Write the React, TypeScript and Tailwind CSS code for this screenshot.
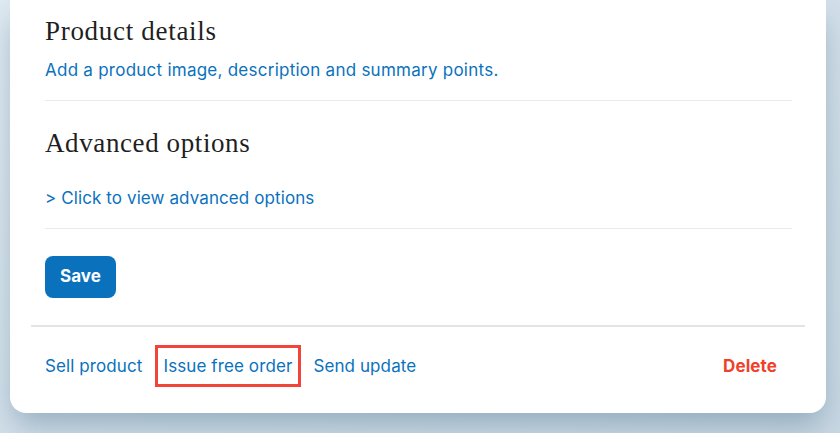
const sans = "font-['Inter','Liberation_Sans',sans-serif] tracking-[0.1px]";
const serif = "font-['Liberation_Serif','DejaVu_Serif',serif]";

export default function App() {
  return (
    <div className="h-[433px] w-[840px] overflow-hidden bg-gradient-to-br from-[#dfeaf2] via-[#d3e0ea] to-[#c9d8e3]">
      <div className="ml-[10px] w-[816px] rounded-b-2xl bg-white shadow-[0_16px_30px_-4px_rgba(90,125,150,0.5)]">
        <div className="px-[35px] pr-[34px]">
          <section className="border-b border-[#e3eaf0] pt-[14px] pb-[18px]">
            <h2 className={`${serif} text-[27px] leading-[34px] tracking-[0.7px] text-[#1f1f1f]`}>Product details</h2>
            <a className={`${sans} mt-[10px] block text-[17px] leading-[24px] tracking-[0.25px] text-[#0a72bd]`}>
              Add a product image, description and summary points.
            </a>
          </section>
          <section className="border-b border-[#e3eaf0] pt-[25px] pb-[18px]">
            <h2 className={`${serif} text-[27px] leading-[34px] tracking-[0.6px] text-[#1f1f1f]`}>Advanced options</h2>
            <a className={`${sans} mt-[26px] block text-[17px] leading-[24px] text-[#0a72bd]`}>
              &gt; Click to view advanced options
            </a>
          </section>
          <div className="pt-[27px] pb-[27px]">
            <button className={`${sans} h-[42px] w-[71px] rounded-lg bg-[#0a72bd] text-[17px] font-bold text-white`}>
              Save
            </button>
          </div>
        </div>
        <div className="mx-[21px] border-t-2 border-[#e4e4e4]" />
        <div className={`${sans} flex h-[86px] items-start px-[35px] pt-[18px] pr-[49px] text-[17px] leading-[24px]`}>
          <div className="flex items-center gap-[12px] text-[#0a72bd]">
            <a className="py-[9px]">Sell product</a>
            <a className="border-[3px] border-[#f2453a] px-[6px] py-[6px]">Issue free order</a>
            <a className="py-[9px]">Send update</a>
          </div>
          <a className="ml-auto py-[9px] font-bold text-[#f0402b]">Delete</a>
        </div>
      </div>
    </div>
  );
}
